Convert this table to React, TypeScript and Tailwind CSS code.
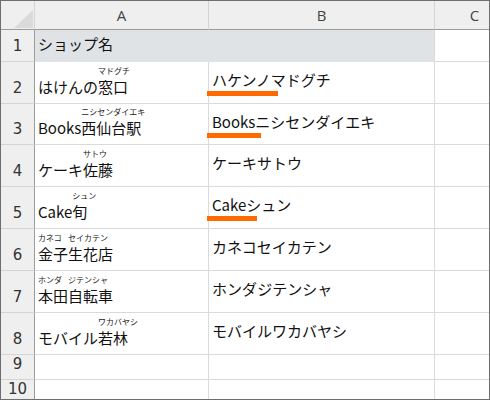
import React from "react";

interface Seg {
  t: string;
  r?: string;
}

interface Row {
  n: number;
  a?: Seg[];
  b?: string;
  bar?: number;
  h: number;
}

const rows: Row[] = [
  { n: 2, a: [{ t: "はけんの" }, { t: "窓口", r: "マドグチ" }], b: "ハケンノマドグチ", bar: 71, h: 42 },
  { n: 3, a: [{ t: "Books" }, { t: "西仙台駅", r: "ニシセンダイエキ" }], b: "Booksニシセンダイエキ", bar: 54, h: 41 },
  { n: 4, a: [{ t: "ケーキ" }, { t: "佐藤", r: "サトウ" }], b: "ケーキサトウ", h: 42 },
  { n: 5, a: [{ t: "Cake" }, { t: "旬", r: "シュン" }], b: "Cakeシュン", bar: 50, h: 42 },
  { n: 6, a: [{ t: "金子", r: "カネコ" }, { t: "生花店", r: "セイカテン" }], b: "カネコセイカテン", h: 42 },
  { n: 7, a: [{ t: "本田", r: "ホンダ" }, { t: "自転車", r: "ジテンシャ" }], b: "ホンダジテンシャ", h: 42 },
  { n: 8, a: [{ t: "モバイル" }, { t: "若林", r: "ワカバヤシ" }], b: "モバイルワカバヤシ", h: 42 },
  { n: 9, h: 25 },
  { n: 10, h: 25 },
];

const jp = "font-['Noto_Sans_CJK_JP',sans-serif]";

function RowNum({ n, h }: { n: number; h: number }) {
  return (
    <div
      className="flex items-end justify-center bg-[#efefef] border-r border-b border-r-[#9c9c9c] border-b-[#d4d4d4] pb-[6px] text-[15px] leading-[18px] text-[#333] font-['DejaVu_Sans',sans-serif]"
      style={{ height: h }}
    >
      {n}
    </div>
  );
}

function Furigana({ segs }: { segs: Seg[] }) {
  return (
    <span className="whitespace-nowrap">
      {segs.map((s, i) =>
        s.r ? (
          <span key={i} className="relative inline-block">
            {s.t}
            <span className="absolute left-0 bottom-full mb-[1px] text-[8px] leading-[10px] whitespace-nowrap text-[#222]">
              {s.r}
            </span>
          </span>
        ) : (
          <span key={i}>{s.t}</span>
        )
      )}
    </span>
  );
}

export default function App() {
  return (
    <div className="w-[490px] h-[400px] overflow-hidden border border-[#6e6e6e] bg-white">
      <div className={`grid grid-cols-[34px_174px_226px_80px] w-[514px] ${jp} text-[15px] text-[#111]`}>
        {/* column headers */}
        <div className="h-[29px] bg-[#efefef] border-r border-b border-r-[#d4d4d4] border-b-[#9c9c9c] relative">
          <svg className="absolute left-[13px] top-[9px]" width="19" height="18" viewBox="0 0 19 18">
            <polygon points="19,0 19,18 0,18" fill="#dadada" />
          </svg>
        </div>
        {["A", "B", "C"].map((c) => (
          <div
            key={c}
            className="h-[29px] flex items-center justify-center bg-[#efefef] border-r border-b border-r-[#d4d4d4] border-b-[#9c9c9c] text-[15px] text-[#444] font-['Open_Sans',sans-serif]"
          >
            {c}
          </div>
        ))}

        {/* row 1 */}
        <RowNum n={1} h={32} />
        <div className="h-[32px] flex items-center pl-[3px] pb-[3px] bg-[#dfe3e6] border-r border-b border-[#dfe3e6]">
          ショップ名
        </div>
        <div className="h-[32px] bg-[#dfe3e6] border-r border-b border-r-[#dadada] border-b-[#dfe3e6]" />
        <div className="h-[32px] border-r border-b border-[#dadada]" />

        {rows.map((r) => (
          <React.Fragment key={r.n}>
            <RowNum n={r.n} h={r.h} />
            <div
              className="flex items-end pl-[3px] pb-[6px] leading-[20px] border-r border-b border-[#dadada]"
              style={{ height: r.h }}
            >
              {r.a && <Furigana segs={r.a} />}
            </div>
            <div
              className="relative pl-[3px] pt-[8px] leading-[20px] whitespace-nowrap border-r border-b border-[#dadada]"
              style={{ height: r.h }}
            >
              {r.b}
              {r.bar && (
                <span
                  className="absolute -left-[2px] top-[29px] h-[5px] bg-[#ff6a00]"
                  style={{ width: r.bar }}
                />
              )}
            </div>
            <div className="border-r border-b border-[#dadada]" style={{ height: r.h }} />
          </React.Fragment>
        ))}
      </div>
    </div>
  );
}
